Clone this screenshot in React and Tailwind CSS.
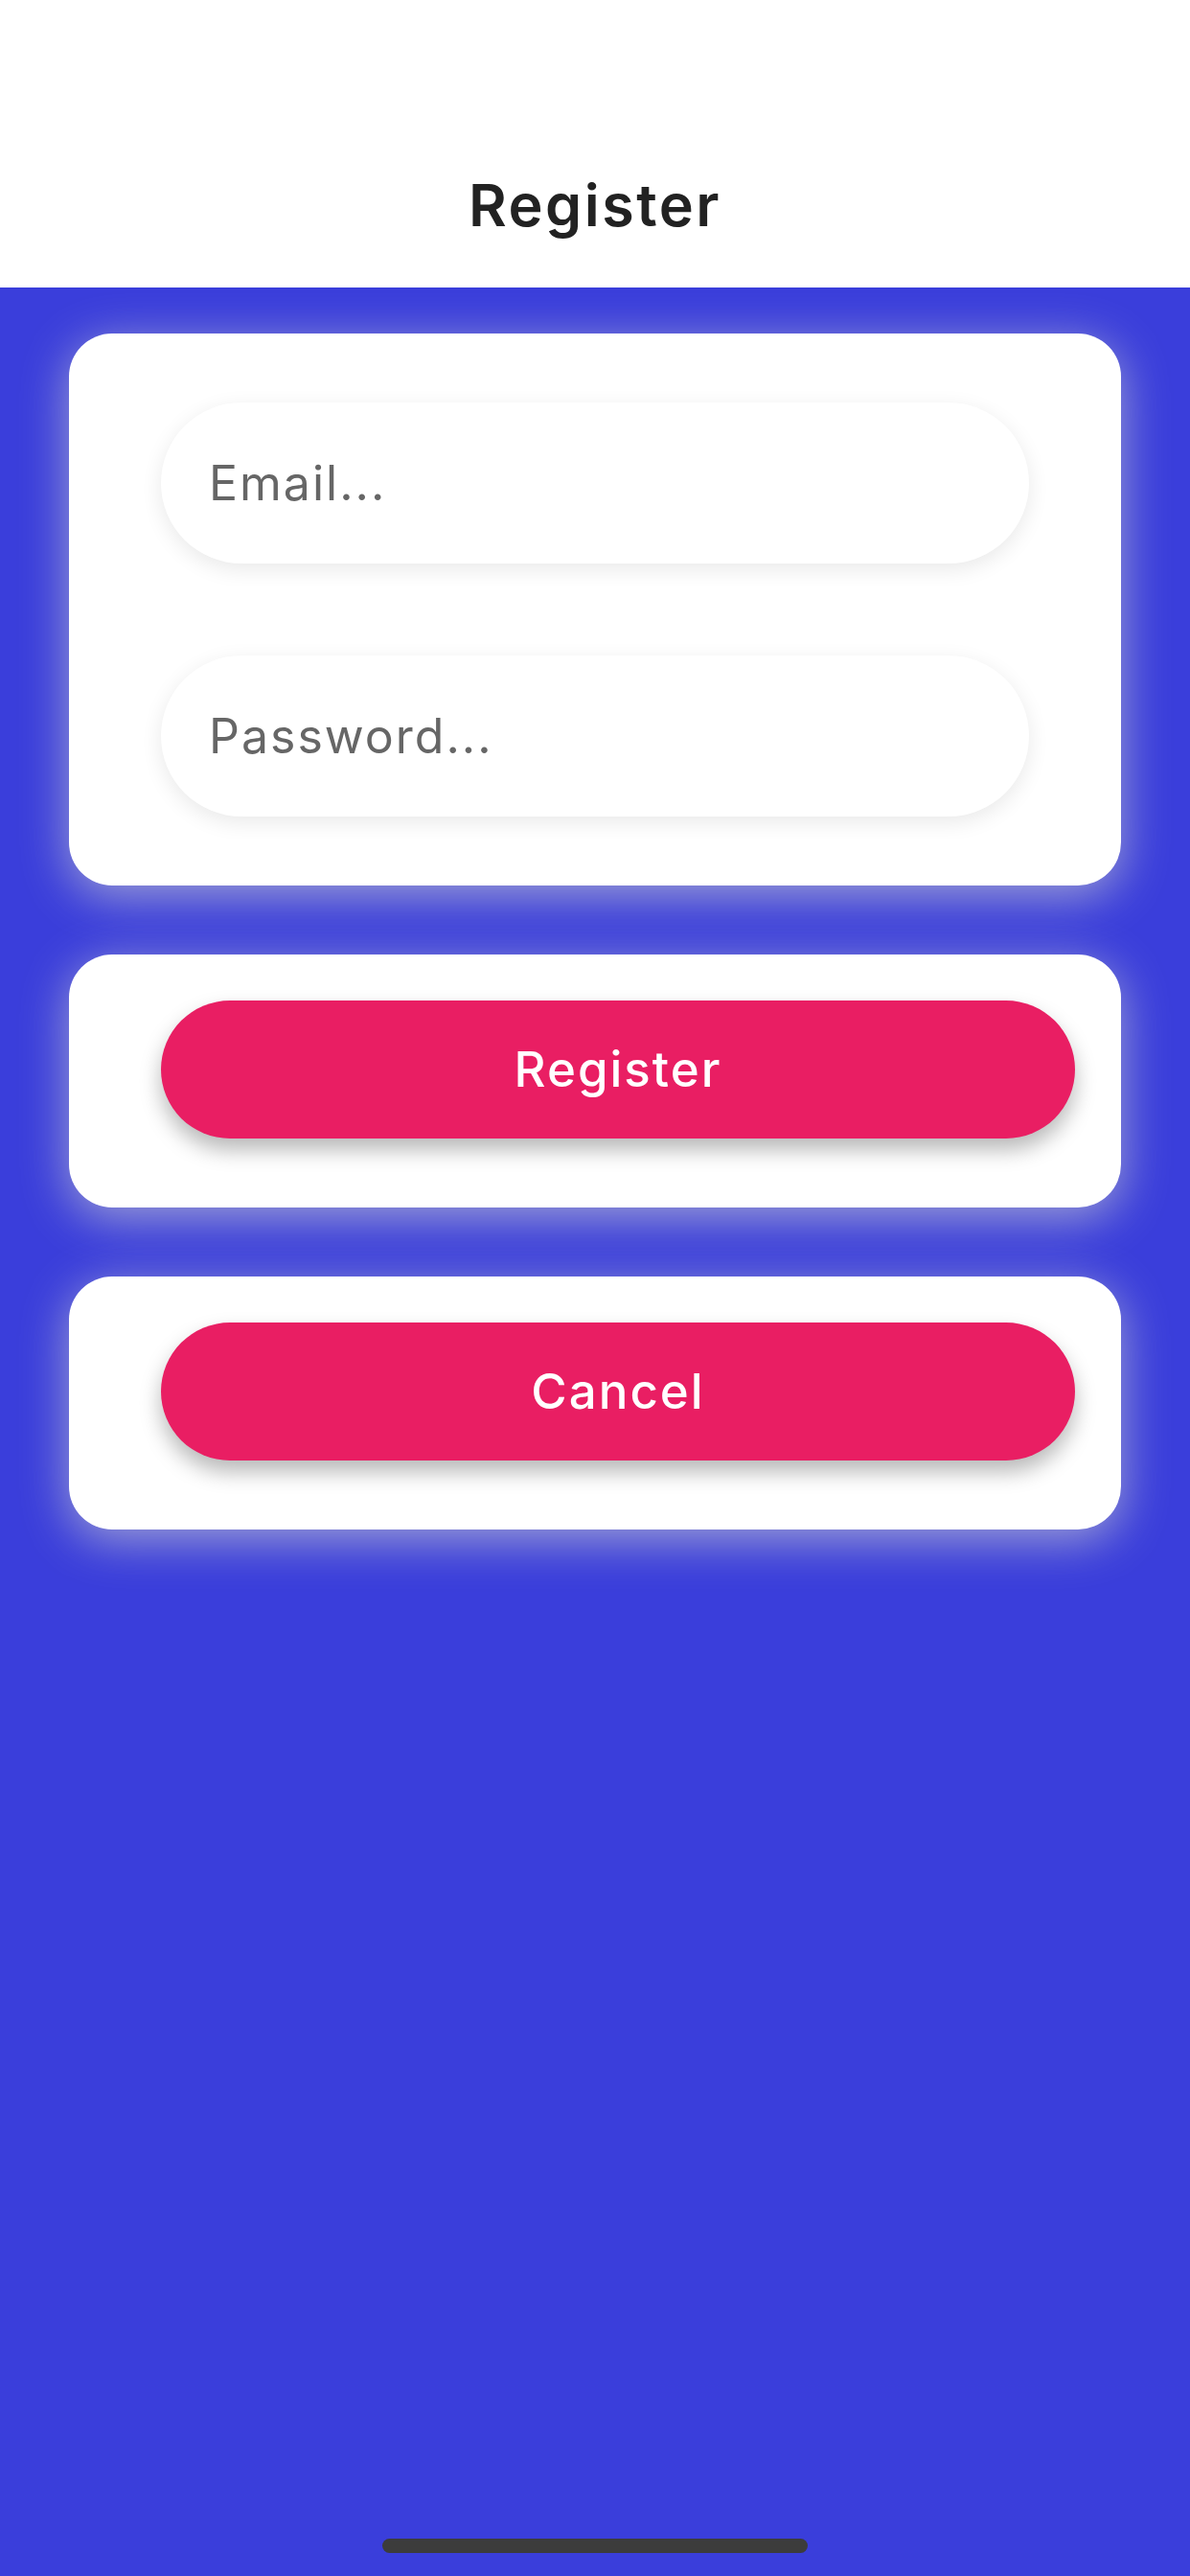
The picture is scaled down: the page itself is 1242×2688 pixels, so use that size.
import React, { useState } from 'react';

const Field = ({ placeholder, type, value, onChange }) => (
  <input
    type={type}
    value={value}
    onChange={onChange}
    placeholder={placeholder}
    className="w-full h-[168px] rounded-full bg-white pl-[50px] pr-8 text-[50px] tracking-[2px] text-[#222] placeholder:text-[#666] outline-none shadow-[0_6px_22px_rgba(0,0,0,0.09)]"
  />
);

const ActionCard = ({ label, onClick }) => (
  <div className="bg-white rounded-[45px] pt-[48px] pb-[72px] pl-[96px] pr-[48px] shadow-[0_10px_50px_rgba(205,205,210,0.7)]">
    <button
      onClick={onClick}
      className="w-full h-[144px] rounded-full bg-[#e91e63] text-white text-[51px] tracking-[2px] font-medium shadow-[0_12px_22px_rgba(0,0,0,0.28)]"
    >
      {label}
    </button>
  </div>
);

const App = () => {
  const [email, setEmail] = useState('');
  const [password, setPassword] = useState('');

  return (
    <div className="relative min-h-screen flex flex-col font-['Inter','Noto_Sans',sans-serif]">
      {/* header */}
      <header className="h-[300px] bg-white flex items-center justify-center pt-[128px]">
        <h1 className="text-[61px] font-semibold tracking-[2.5px] text-[#222] leading-none">Register</h1>
      </header>

      <main className="flex-1 bg-[#3a3edb] px-[72px] pt-[48px] flex flex-col gap-[72px]">
        <div className="bg-white rounded-[45px] px-[96px] py-[72px] flex flex-col gap-[96px] shadow-[0_10px_50px_rgba(205,205,210,0.7)]">
          <Field placeholder="Email..." type="email" value={email} onChange={(e) => setEmail(e.target.value)} />
          <Field placeholder="Password..." type="password" value={password} onChange={(e) => setPassword(e.target.value)} />
        </div>

        <ActionCard label="Register" />
        <ActionCard label="Cancel" />
      </main>

      {/* home indicator */}
      <div className="absolute bottom-[24px] left-1/2 -translate-x-1/2 w-[444px] h-[15px] rounded-full bg-[#3c3c3c]" />
    </div>
  );
};

export default App;
